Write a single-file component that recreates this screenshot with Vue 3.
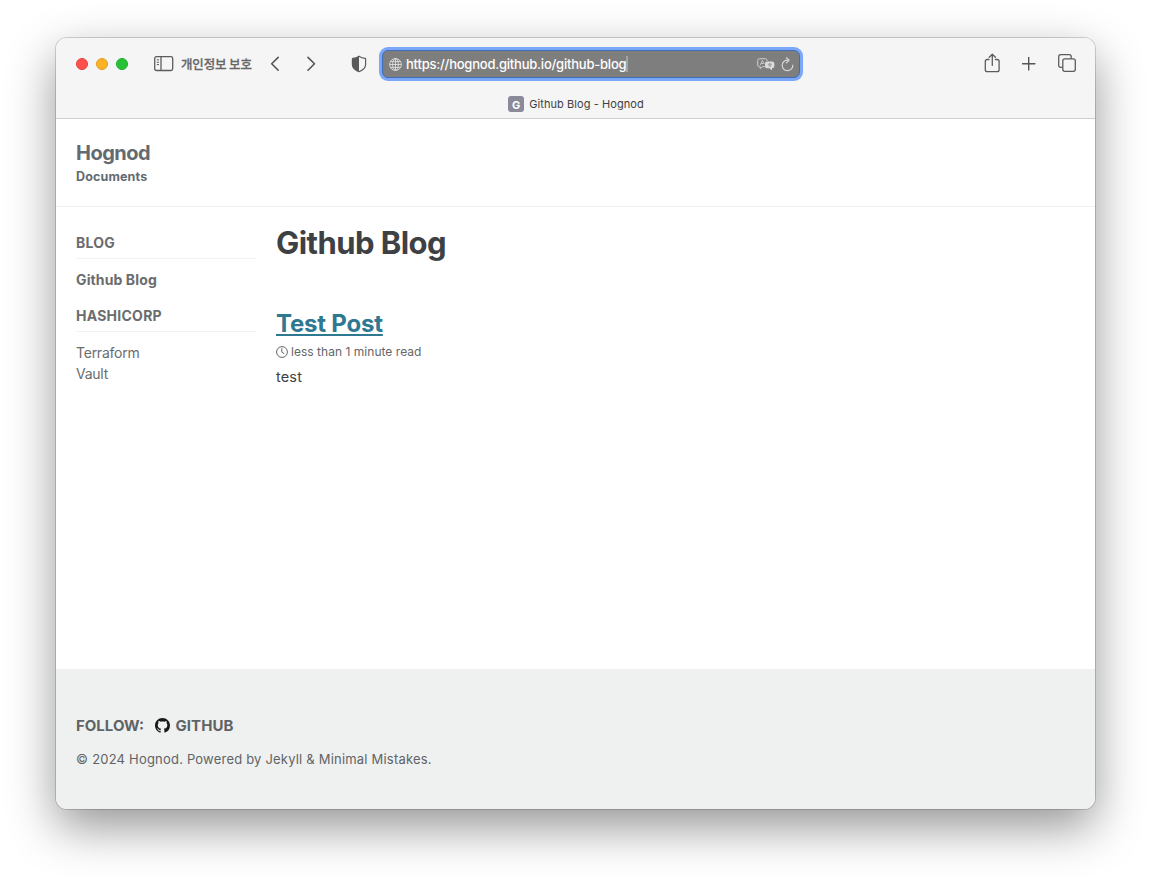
<script setup>
const lights = ['red', 'amber', 'green']
const groups = [
  { title: 'BLOG', items: [{ label: 'Github Blog', active: true }] },
  { title: 'HASHICORP', items: [{ label: 'Terraform' }, { label: 'Vault' }] },
]
</script>

<template>
  <div class="desktop">
    <div class="window">
      <header class="chrome">
        <div class="toolbar">
          <div class="lights">
            <span v-for="c in lights" :key="c" class="light" :class="c"></span>
          </div>
          <svg class="sidebar-icon" width="20" height="16" viewBox="0 0 20 16" fill="none" stroke="#5c5c5c" stroke-width="1.3">
            <rect x="0.7" y="0.7" width="18" height="13.8" rx="1.8" />
            <path d="M7 .8v13.6" />
            <path d="M2.8 3.8h2.2M2.8 6.2h2.2M2.8 8.6h2.2" stroke-width="1" />
          </svg>
          <span class="private">개인정보 보호</span>
          <svg class="back" width="10" height="16" viewBox="0 0 10 16" fill="none" stroke="#555" stroke-width="1.6" stroke-linecap="round" stroke-linejoin="round"><path d="M8.2 1.4L1.7 7.8L8.2 14.2" /></svg>
          <svg class="forward" width="10" height="16" viewBox="0 0 10 16" fill="none" stroke="#555" stroke-width="1.6" stroke-linecap="round" stroke-linejoin="round"><path d="M2 1.4L8.5 7.8L2 14.2" /></svg>
          <svg class="shield" width="16" height="18" viewBox="0 0 16 18">
            <path d="M8 1.2C6.4 2.4 4 3.2 1.9 3.4Q1.4 3.5 1.4 4V9.4C1.4 12.8 4.5 15.2 8 16.7C11.5 15.2 14.6 12.8 14.6 9.4V4Q14.6 3.5 14.1 3.4C12 3.2 9.6 2.4 8 1.2Z" fill="none" stroke="#5a5a5a" stroke-width="1.2" />
            <path d="M8 1.2C6.4 2.4 4 3.2 1.9 3.4Q1.4 3.5 1.4 4V9.4C1.4 12.8 4.5 15.2 8 16.7Z" fill="#5a5a5a" />
          </svg>
          <div class="address">
            <svg class="globe" width="13" height="13" viewBox="0 0 13 13" fill="none" stroke="#e4e4e4" stroke-width="0.85">
              <circle cx="6.5" cy="6.5" r="5.9" />
              <ellipse cx="6.5" cy="6.5" rx="2.9" ry="5.9" />
              <path d="M6.5 .6v11.8M.6 6.5h11.8M1.5 3.6h10M1.5 9.4h10" />
            </svg>
            <span class="url">https://hognod.github.io/github-blog</span>
            <span class="caret"></span>
            <svg class="translate" width="18" height="13" viewBox="0 0 18 13">
              <path d="M8 8.7H5.3L3.2 10.6V8.7H2.4Q.7 8.7 .7 7V2.4Q.7 .7 2.4 .7H8.3Q10 .7 10 2.4V3" fill="none" stroke="#cecece" stroke-width="1" />
              <path d="M3.3 7L5.4 2.5L7.2 6M4.1 5.5H6.6" fill="none" stroke="#cecece" stroke-width=".9" />
              <path d="M10 3.5H15.2Q17.4 3.5 17.4 5.7V8Q17.4 10.2 15.2 10.2H15V12.4L12.6 10.2H10Q8 10.2 8 8V5.7Q8 3.5 10 3.5Z" fill="#dadada" />
              <path d="M10.8 6.2H14.8M12.8 5V6.2M11.6 8.4Q13.6 7.9 13.9 6.2M11.7 6.4Q12 7.9 14 8.4" fill="none" stroke="#7e7e7e" stroke-width=".6" />
            </svg>
            <svg class="reload" width="13" height="15" viewBox="0 0 13 15" fill="none" stroke="#d6d6d6" stroke-width="1.2" stroke-linecap="round" stroke-linejoin="round">
              <path d="M7.6 3.2A5.3 5.3 0 1 0 11.8 8.2" />
              <path d="M5.4 .8L8 3.3L5.4 5.9" />
            </svg>
          </div>
          <svg class="share" width="16" height="20" viewBox="0 0 16 20" fill="none" stroke="#5c5c5c" stroke-width="1.3" stroke-linecap="round" stroke-linejoin="round">
            <path d="M5 6.5H3.3Q1.3 6.5 1.3 8.5V16.7Q1.3 18.7 3.3 18.7H13.1Q15.1 18.7 15.1 16.7V8.5Q15.1 6.5 13.1 6.5H11.4" />
            <path d="M8.3 12.4V1.4M5.2 4.2L8.3 1.2L11.4 4.2" />
          </svg>
          <svg class="plus" width="14" height="14" viewBox="0 0 14 14" stroke="#555" stroke-width="1.4" stroke-linecap="round"><path d="M6.7 .5v12.4M.5 6.7h12.4" /></svg>
          <svg class="tabs" width="18" height="18" viewBox="0 0 18 18" fill="none" stroke="#5c5c5c" stroke-width="1.3">
            <rect x="4.8" y="4.8" width="12.5" height="12.5" rx="2" />
            <path d="M4.8 13.3H2.7Q.7 13.3 .7 11.3V2.7Q.7 .7 2.7 .7H11.2Q13.2 .7 13.2 2.7V4.8" />
          </svg>
        </div>
        <div class="tabbar">
          <span class="favicon">G</span>
          <span class="tab-title">Github Blog - Hognod</span>
        </div>
      </header>

      <div class="masthead">
        <div class="site-title">Hognod</div>
        <div class="site-subtitle">Documents</div>
      </div>

      <div class="content">
        <nav class="sidebar">
          <section v-for="g in groups" :key="g.title" class="group">
            <h3>{{ g.title }}</h3>
            <ul>
              <li v-for="i in g.items" :key="i.label" :class="{ active: i.active }">{{ i.label }}</li>
            </ul>
          </section>
        </nav>
        <main class="archive">
          <h1>Github Blog</h1>
          <h2><a>Test Post</a></h2>
          <p class="meta">
            <svg width="12" height="12" viewBox="0 0 12 12" fill="none" stroke="#646769" stroke-width="1"><circle cx="6" cy="6" r="5.4" /><path d="M5.8 2.6V6.1L8 7.6" stroke-linecap="round" /></svg>
            <span>less than 1 minute read</span>
          </p>
          <p class="excerpt">test</p>
        </main>
      </div>

      <footer class="footer">
        <div class="follow">
          <span>FOLLOW:</span>
          <svg width="15" height="15" viewBox="0 0 16 16" fill="#17191b"><path d="M8 0C3.58 0 0 3.58 0 8c0 3.54 2.29 6.53 5.47 7.59.4.07.55-.17.55-.38 0-.19-.01-.82-.01-1.49-2.01.37-2.53-.49-2.69-.94-.09-.23-.48-.94-.82-1.13-.28-.15-.68-.52-.01-.53.63-.01 1.08.58 1.23.82.72 1.21 1.87.87 2.33.66.07-.52.28-.87.51-1.07-1.78-.2-3.64-.89-3.64-3.95 0-.87.31-1.59.82-2.15-.08-.2-.36-1.02.08-2.12 0 0 .67-.21 2.2.82.64-.18 1.32-.27 2-.27s1.36.09 2 .27c1.53-1.04 2.2-.82 2.2-.82.44 1.1.16 1.92.08 2.12.51.56.82 1.27.82 2.15 0 3.07-1.87 3.75-3.65 3.95.29.25.54.73.54 1.48 0 1.07-.01 1.93-.01 2.2 0 .21.15.46.55.38A8.01 8.01 0 0 0 16 8c0-4.42-3.58-8-8-8Z" /></svg>
          <span class="github">GITHUB</span>
        </div>
        <div class="copyright"><span class="mark">©</span> 2024 Hognod. Powered by Jekyll &amp; Minimal Mistakes.</div>
      </footer>
    </div>
  </div>
</template>

<style>
body { margin: 0; background: #fff; }
</style>

<style scoped>
.desktop {
  box-sizing: border-box;
  width: 1151px;
  height: 883px;
  padding: 38px 56px 74px;
  overflow: hidden;
  background: #fff;
  font-family: Inter, "Noto Sans CJK KR", sans-serif;
}
.desktop svg { display: block; flex: none; }
.window {
  display: flex;
  flex-direction: column;
  width: 1039px;
  height: 771px;
  border-radius: 11px;
  overflow: hidden;
  background: #fff;
  box-shadow: 0 0 0 1px rgba(0, 0, 0, 0.16), 0 18px 48px rgba(0, 0, 0, 0.42);
}
.chrome {
  box-sizing: border-box;
  height: 81px;
  background: #f5f5f5;
  border-bottom: 1px solid #cfcfcf;
}
.toolbar {
  display: flex;
  align-items: center;
  height: 52px;
  padding: 0 19px 0 20px;
}
.lights { display: flex; gap: 8px; }
.light {
  box-sizing: border-box;
  width: 12px;
  height: 12px;
  border-radius: 50%;
}
.red { background: #fe4f4b; border: 1px solid #e2423f; }
.amber { background: #fdb226; border: 1px solid #e09e22; }
.green { background: #27c138; border: 1px solid #1eac2c; }
.sidebar-icon { margin-left: 26px; }
.private {
  width: 74px;
  margin-left: 7px;
  color: #666;
  font: 500 12.5px/18px "Noto Sans CJK KR", sans-serif;
  letter-spacing: -0.15px;
  -webkit-text-stroke: 0.25px #666;
  white-space: nowrap;
}
.back { margin-left: 15px; }
.forward { margin-left: 26px; }
.shield { margin-left: 35px; }
.address {
  box-sizing: border-box;
  display: flex;
  align-items: center;
  width: 418px;
  height: 28px;
  margin-left: 15px;
  padding: 0 5px 0 6px;
  border: 1px solid #426db5;
  border-radius: 6px;
  background: #7e7e7e;
  box-shadow: 0 0 0 3px #7aa7f8;
}
.url {
  margin-left: 4px;
  color: #fff;
  font-size: 13px;
  font-weight: 500;
  line-height: 18px;
  letter-spacing: -0.22px;
  white-space: nowrap;
}
.caret { width: 2px; height: 16px; background: #a5a5a5; }
.translate { margin-left: auto; }
.reload { margin-left: 6px; }
.share { margin-left: auto; margin-bottom: 2px; }
.plus { margin-left: 22px; }
.tabs { margin-left: 22px; margin-bottom: 2px; }
.tabbar {
  display: flex;
  align-items: center;
  justify-content: center;
  gap: 5px;
  height: 28px;
  padding-left: 1px;
}
.favicon {
  width: 16px;
  height: 16px;
  border-radius: 3px;
  background: #8a8a98;
  color: #fff;
  font-size: 11px;
  font-weight: 700;
  line-height: 18px;
  text-align: center;
}
.tab-title {
  color: #3f3f3f;
  font-size: 11px;
  line-height: 16px;
  letter-spacing: 0.07px;
}
.masthead {
  box-sizing: border-box;
  height: 88px;
  padding: 22px 20px 0;
  border-bottom: 1px solid #f0f1f1;
  color: #646b70;
  font-weight: 700;
}
.site-title { font-size: 20px; line-height: 24px; letter-spacing: -0.5px; }
.site-subtitle { margin-top: 4px; font-size: 12.5px; line-height: 16px; letter-spacing: 0.15px; }
.content {
  display: flex;
  flex: 1;
  gap: 20px;
  padding: 0 20px;
}
.sidebar { width: 180px; padding-top: 26px; color: #6a6c6e; }
.group { margin-bottom: 16px; }
.group h3 {
  box-sizing: border-box;
  height: 26px;
  margin: 0;
  border-bottom: 1px solid #f2f3f3;
  font-size: 14px;
  font-weight: 700;
  line-height: 20px;
  letter-spacing: 0.25px;
}
.group ul { margin: 0; padding: 10px 0 0; list-style: none; }
.group li { font-size: 14px; line-height: 21px; letter-spacing: -0.24px; }
.group li.active { font-weight: 700; letter-spacing: 0.12px; }
.archive { flex: 1; }
.archive h1 {
  margin: 16px 0 0;
  color: #3d4144;
  font-size: 31px;
  line-height: 39px;
  letter-spacing: -0.55px;
}
.archive h2 {
  margin: 46px 0 0;
  color: #2f7891;
  font-size: 24px;
  line-height: 32px;
  letter-spacing: -0.2px;
}
.archive a { text-decoration: underline; text-decoration-thickness: 2px; text-underline-offset: 2px; text-decoration-skip-ink: none; }
.meta {
  display: flex;
  align-items: center;
  gap: 3px;
  margin: 3px 0 0;
  color: #646769;
  font-size: 12px;
  line-height: 18px;
  letter-spacing: 0.03px;
}
.excerpt { margin: 5px 0 0; color: #3d4144; font-size: 14.5px; line-height: 21px; letter-spacing: 0.15px; }
.footer {
  box-sizing: border-box;
  height: 140px;
  padding: 45px 20px 0;
  background: #eff1f1;
  color: #606365;
}
.follow { display: flex; align-items: center; height: 22px; font-size: 15px; font-weight: 700; }
.follow svg { margin-left: 11px; }
.github { margin-left: 5.5px; letter-spacing: 0.1px; }
.copyright { margin-top: 13px; font-size: 13px; line-height: 20px; letter-spacing: 0.2px; white-space: nowrap; }
.mark { letter-spacing: 0.4px; }
</style>
